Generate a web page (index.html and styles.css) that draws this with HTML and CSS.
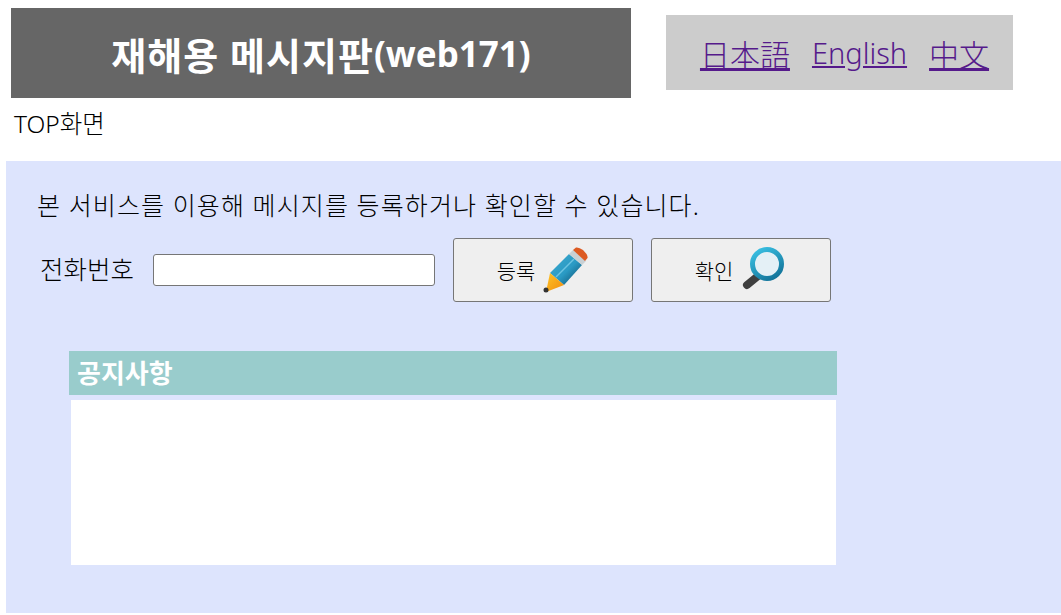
FILE: index.html
```html
<!DOCTYPE html>
<html lang="ko">
  <head>
    <meta charset="utf-8">
    <title>재해용 메시지판(web171)</title>
    <link rel="stylesheet" href="styles.css">
  </head>
  <body>
    <div class="top">
      <h1 class="title"><span class="title-ko">재해용 메시지판</span><span class="title-en">(web171)</span></h1>
      <div class="langs">
        <a class="cjk" href="#">日本語</a>
        <a href="#">English</a>
        <a class="cjk" href="#">中文</a>
      </div>
    </div>
    <p class="crumb">TOP화면</p>

    <div class="panel">
      <p class="intro">본 서비스를 이용해 메시지를 등록하거나 확인할 수 있습니다.</p>
      <form class="phone-form" onsubmit="return false">
        <label class="phone-label" for="phone">전화번호</label>
        <input class="phone-input" id="phone" type="text">
        <button class="action" type="button">
          등록
          <svg class="icon" viewBox="0 0 48 48" width="48" height="48">
            <defs>
              <linearGradient id="pencilBody" x1="0.15" y1="0.15" x2="0.85" y2="0.85">
                <stop offset="0" stop-color="#3aa6cc"/>
                <stop offset="0.55" stop-color="#2a9ac4"/>
                <stop offset="1" stop-color="#135f82"/>
              </linearGradient>
              <linearGradient id="pencilTip" x1="0" y1="0" x2="1" y2="1">
                <stop offset="0" stop-color="#ffc425"/>
                <stop offset="1" stop-color="#f08c10"/>
              </linearGradient>
            </defs>
            <path d="M9 27 L28 8 L41 19 L23 39 Z" fill="url(#pencilBody)"/>
            <path d="M15 31 L33 13" stroke="#6cc4e2" stroke-width="1.5" fill="none"/>
            <path d="M28 8 L32 4 L45 15 L41 19 Z" fill="#c8d0d4"/>
            <path d="M32 4 L35 1.5 Q38 1 42 4 L45.5 8 Q47 11 46.5 12 L44 15 Z" fill="#dc5a22"/>
            <path d="M9 27 L23 39 L5 46 Z" fill="url(#pencilTip)"/>
            <circle cx="5" cy="44" r="2.5" fill="#333"/>
          </svg>
        </button>
        <button class="action" type="button">
          확인
          <svg class="icon" viewBox="0 0 48 48" width="48" height="48">
            <defs>
              <linearGradient id="lensRing" x1="0.2" y1="0" x2="0.8" y2="1">
                <stop offset="0" stop-color="#38bde0"/>
                <stop offset="1" stop-color="#127399"/>
              </linearGradient>
            </defs>
            <path d="M8 39 L19 30" stroke="#3f3f3f" stroke-width="8" stroke-linecap="round"/>
            <circle cx="28" cy="18" r="14.5" fill="#e4f0f6" stroke="url(#lensRing)" stroke-width="5"/>
          </svg>
        </button>
      </form>

      <div class="notice">
        <h2 class="notice-head">공지사항</h2>
        <div class="notice-body"></div>
      </div>
    </div>
  </body>
</html>
```

FILE: styles.css
```css
body {
  margin: 0;
  padding: 8px 0 2px 6px;
  font-family: "Noto Sans", "Noto Sans CJK KR", sans-serif;
  font-weight: 300;
  color: #000;
  background: #fff;
}
.top {
  display: flex;
  align-items: flex-start;
  padding-left: 5px;
}
.title {
  width: 620px;
  height: 90px;
  margin: 0;
  display: flex;
  align-items: center;
  justify-content: center;
  background: #666;
  color: #fff;
  font-weight: bold;
  white-space: pre;
}
.title-ko {
  font-size: 38px;
  letter-spacing: 1px;
}
.title-en {
  font-size: 35px;
}
.langs {
  width: 347px;
  height: 75px;
  box-sizing: border-box;
  margin: 7px 0 0 35px;
  padding-left: 10px;
  display: flex;
  align-items: center;
  justify-content: center;
  gap: 22px;
  background: #ccc;
  font-size: 29px;
}
.langs a {
  color: #551a8b;
}
.langs .cjk {
  font-family: "Noto Sans CJK JP", sans-serif;
  font-size: 30px;
}
.crumb {
  margin: 0;
  padding: 9px 0 0 8px;
  height: 63px;
  box-sizing: border-box;
  font-size: 24.5px;
  line-height: 33px;
}
.panel {
  height: 452px;
  box-sizing: border-box;
  padding: 27px 0 0 31px;
  background: #dde4fd;
}
.intro {
  margin: 0;
  font-size: 25px;
  line-height: 34px;
  letter-spacing: 1.1px;
}
.phone-form {
  display: flex;
  align-items: center;
  margin-top: 16px;
  padding-left: 3px;
}
.phone-label {
  width: 113px;
  padding-bottom: 6px;
  font-size: 25.5px;
}
.phone-input {
  width: 282px;
  height: 32px;
  box-sizing: border-box;
  border: 1px solid #767676;
  border-radius: 3px;
  background: #fff;
}
.action {
  width: 180px;
  height: 64px;
  margin-left: 18px;
  display: flex;
  align-items: center;
  justify-content: center;
  gap: 6px;
  border: 1px solid #767676;
  border-radius: 3px;
  background: #efefef;
  color: #000;
  font-family: inherit;
  font-weight: 300;
  font-size: 21px;
}
.notice {
  width: 768px;
  margin: 49px 0 0 32px;
}
.notice-head {
  margin: 0;
  height: 44px;
  padding-left: 8px;
  background: #9cc;
  color: #fff;
  font-size: 26px;
  line-height: 44px;
}
.notice-body {
  width: 765px;
  height: 165px;
  margin: 5px 0 0 2px;
  background: #fff;
}
```
